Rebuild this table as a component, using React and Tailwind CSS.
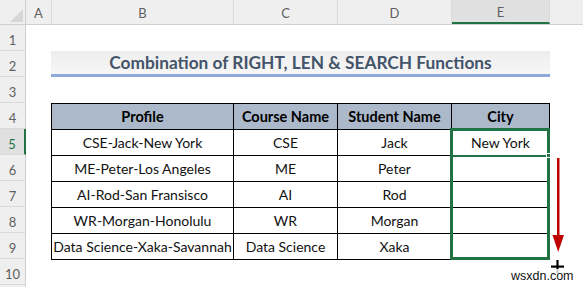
import React from 'react'

const cols = [
  { key: 'A', w: 'w-[26px]' },
  { key: 'B', w: 'w-[182px]' },
  { key: 'C', w: 'w-[104px]' },
  { key: 'D', w: 'w-[114px]' },
  { key: 'E', w: 'w-[98px]', active: true },
]

const tableCols = ['w-[182px]', 'w-[104px]', 'w-[114px]', 'w-[98px]']

const head = ['Profile', 'Course Name', 'Student Name', 'City']

const rows = [
  ['CSE-Jack-New York', 'CSE', 'Jack', 'New York'],
  ['ME-Peter-Los Angeles', 'ME', 'Peter', ''],
  ['AI-Rod-San Fransisco', 'AI', 'Rod', ''],
  ['WR-Morgan-Honolulu', 'WR', 'Morgan', ''],
  ['Data Science-Xaka-Savannah', 'Data Science', 'Xaka', ''],
]

const ColumnHeaders = () => (
  <div className="flex h-[25px] shrink-0 bg-[#efefef] border-b border-[#d0d0d0]">
    <div className="w-[26px] shrink-0 border-r border-[#d0d0d0] flex items-end justify-end p-[2px]">
      <svg width="13" height="13" viewBox="0 0 13 13">
        <polygon points="13,0 13,13 0,13" fill="#d7d7d7" />
      </svg>
    </div>
    {cols.map(col => (
      <div
        key={col.key}
        className={`${col.w} shrink-0 border-r border-[#dadada] flex items-center justify-center pt-[3px] text-[13px] text-[#5f5f5f] ${col.active ? 'bg-[#e0e0e0] border-b-2 border-b-[#217346]' : ''}`}
      >
        {col.key}
      </div>
    ))}
    <div className="flex-1" />
  </div>
)

const RowHeaders = () => (
  <div className="w-[26px] shrink-0 flex flex-col bg-[#efefef] border-r border-[#d0d0d0]">
    {Array.from({ length: 10 }, (_, i) => i + 1).map(n => (
      <div
        key={n}
        className={`h-[26px] shrink-0 border-b border-[#dadada] flex items-center justify-center pt-[6px] text-[13px] ${n === 5 ? 'bg-[#e0e0e0] text-[#217346] border-r-2 border-r-[#217346] -mr-px' : 'text-[#5f5f5f]'}`}
      >
        {n}
      </div>
    ))}
    <div className="flex-1" />
  </div>
)

const DataTable = () => (
  <div className="flex flex-col border-l border-t border-black">
    <div className="flex h-[26px] bg-[#acb9ca]">
      {head.map((h, i) => (
        <div
          key={h}
          className={`${tableCols[i]} shrink-0 border-r border-b border-black flex items-center justify-center text-[14.5px] font-bold text-black`}
        >
          {h}
        </div>
      ))}
    </div>
    {rows.map(r => (
      <div key={r[0]} className="flex h-[26px]">
        {r.map((cell, i) => (
          <div
            key={i}
            className={`${tableCols[i]} shrink-0 border-r border-b border-black flex items-center justify-center text-[14px] text-[#111] whitespace-nowrap`}
          >
            {cell}
          </div>
        ))}
      </div>
    ))}
  </div>
)

export default function App() {
  return (
    <div className="relative w-[583px] h-[287px] overflow-hidden bg-white flex flex-col font-['Lato',sans-serif]">
      <ColumnHeaders />
      <div className="flex flex-1">
        <RowHeaders />
        <div className="flex-1 flex flex-col">
          <div className="h-[26px]" />
          <div className="flex h-[26px]">
            <div className="w-[25px] shrink-0" />
            <div className="w-[499px] shrink-0 bg-gradient-to-b from-[#ededed] to-[#f7f7f7] border-b-[3px] border-[#8eaadb] flex items-center justify-center text-[17.3px] font-bold text-[#44546a]">
              Combination of RIGHT, LEN &amp; SEARCH Functions
            </div>
          </div>
          <div className="h-[26px]" />
          <div className="flex">
            <div className="w-[25px] shrink-0" />
            <DataTable />
          </div>
        </div>
      </div>

      {/* selected range E5:E9 */}
      <div className="absolute left-[450px] top-[128px] w-[100px] h-[132px] border-[3px] border-[#217346]" />
      <div className="absolute left-[452px] top-[155px] w-[96px] h-[2px] bg-[#217346]" />
      <div className="absolute left-[546px] top-[153px] w-[5px] h-[5px] bg-[#217346] border border-white" />

      {/* fill drag arrow */}
      <svg className="absolute left-[550px] top-[156px]" width="16" height="98" viewBox="0 0 16 98">
        <rect x="7" y="2" width="2.5" height="80" fill="#c00000" />
        <polygon points="2.5,79 14,79 8.2,96" fill="#c00000" />
      </svg>
      <svg className="absolute left-[551px] top-[260px]" width="14" height="13" viewBox="0 0 14 13">
        <rect x="0" y="5.5" width="13" height="2.2" fill="#000" />
        <rect x="5.4" y="0" width="2.2" height="13" fill="#000" />
      </svg>
      <div className="absolute left-[510px] top-[269px] px-px bg-white/80 font-['Liberation_Sans',sans-serif] text-[12.5px] leading-[15px] text-[#111]">
        wsxdn.com
      </div>
    </div>
  )
}
